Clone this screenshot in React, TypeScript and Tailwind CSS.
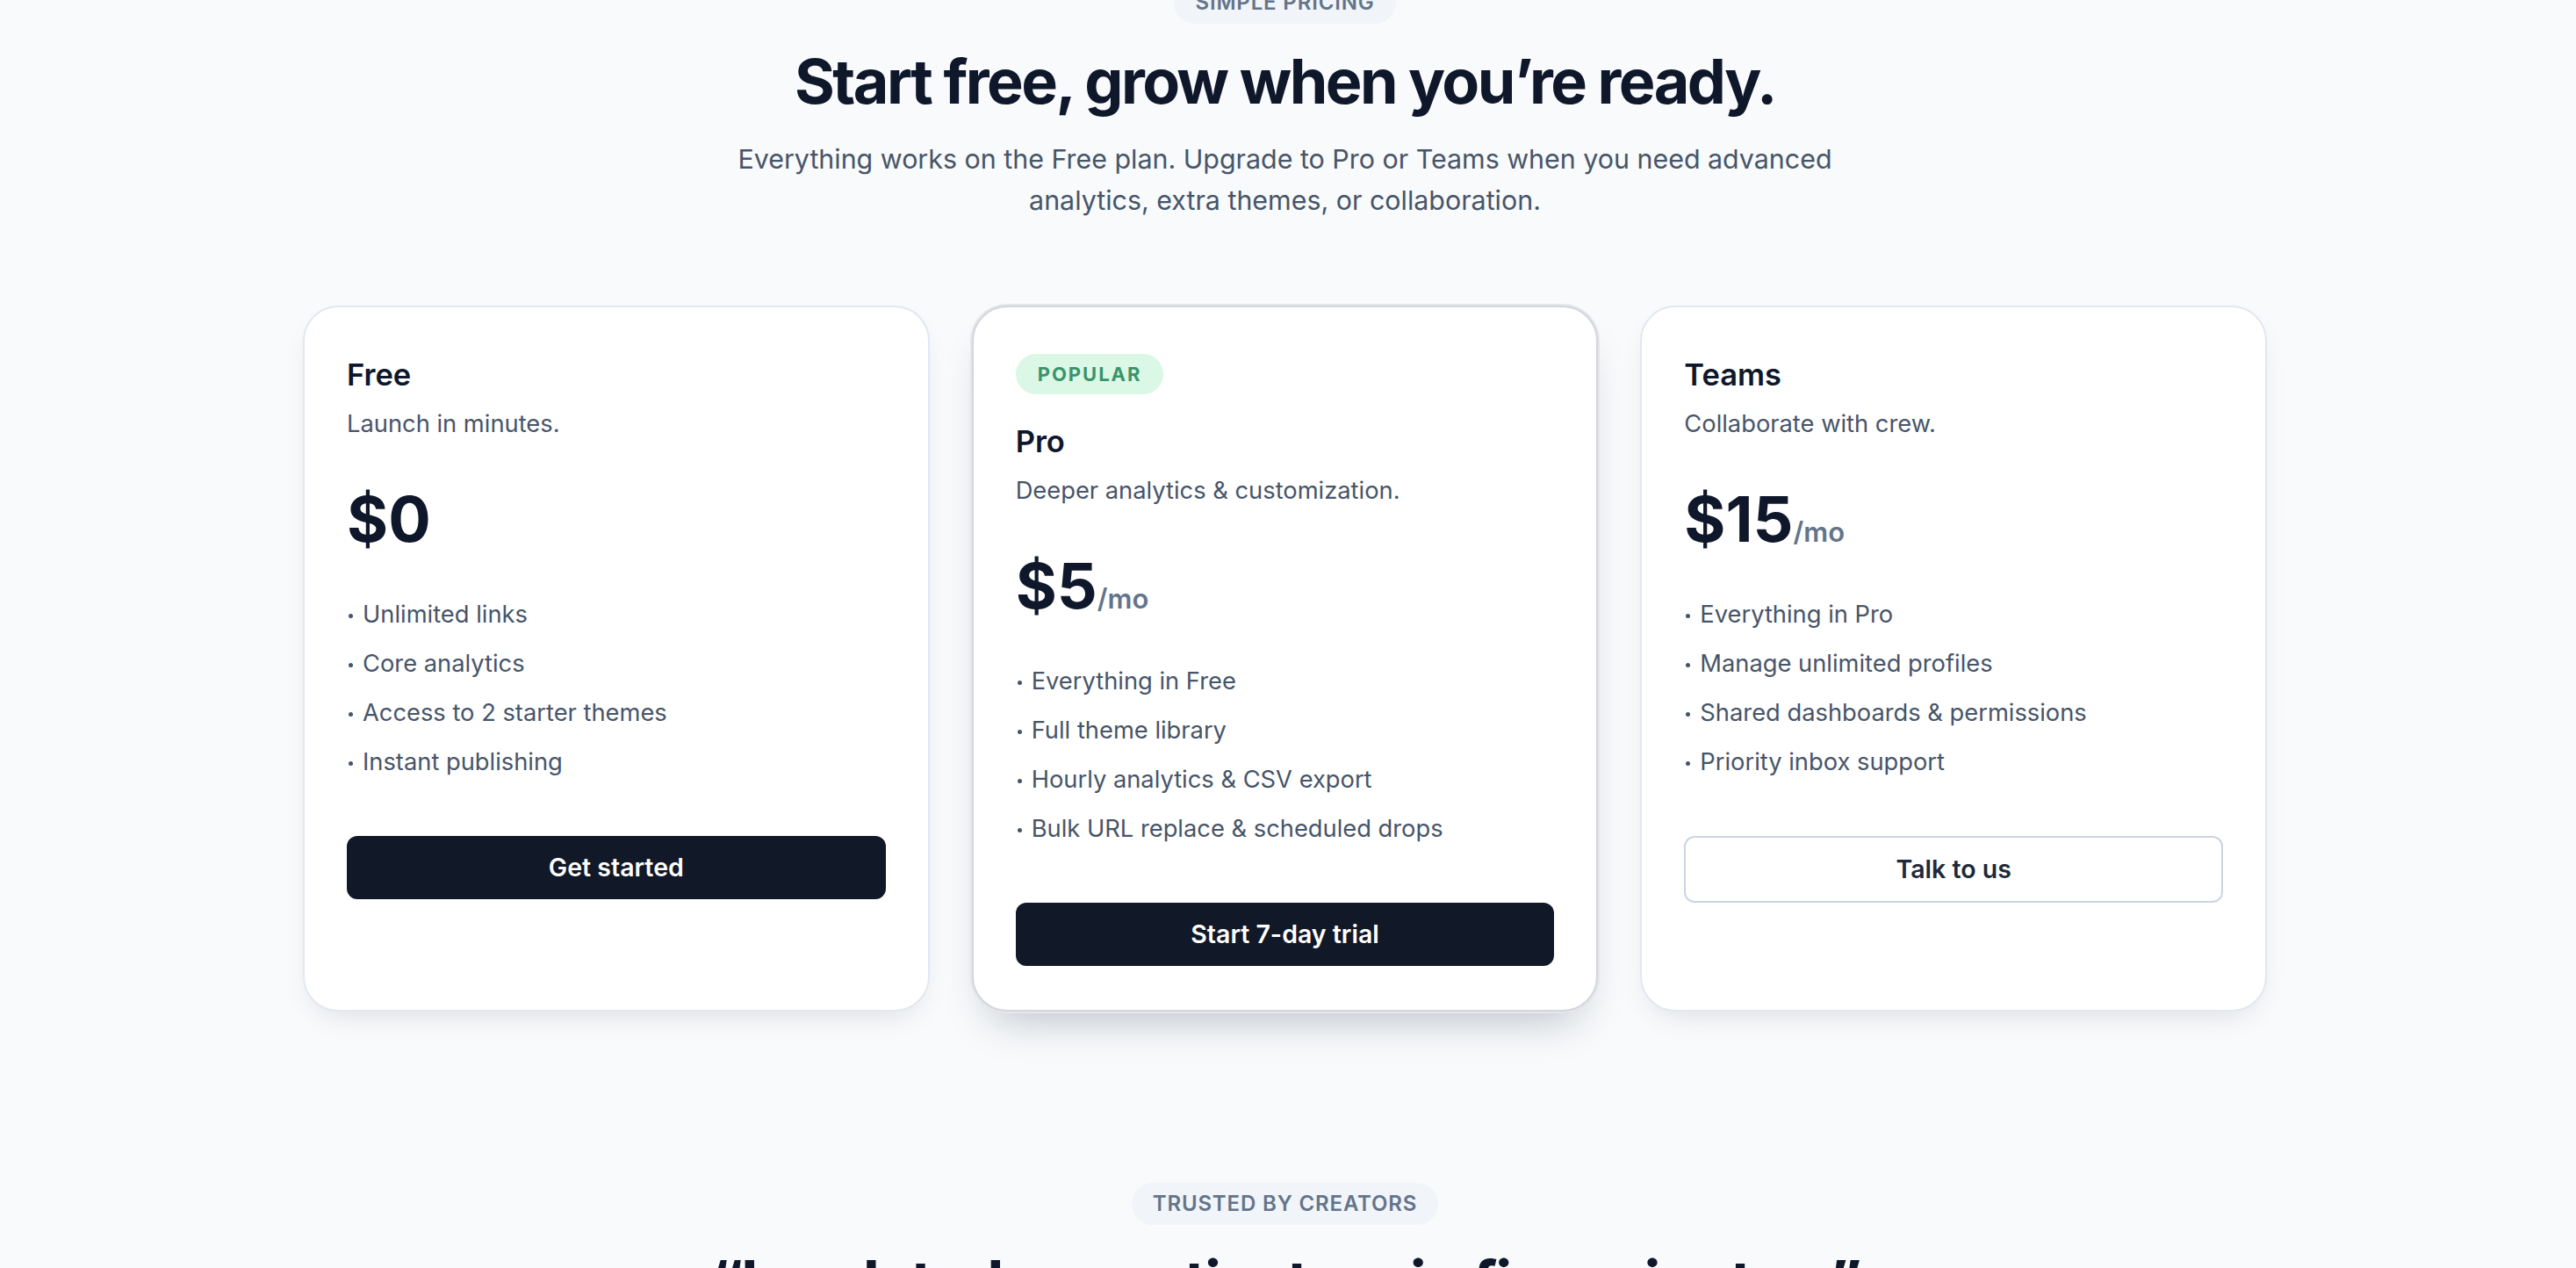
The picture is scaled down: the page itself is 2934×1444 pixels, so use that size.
import React from "react";

type Plan = {
  name: string;
  desc: string;
  price: string;
  per?: string;
  features: string[];
  cta: string;
  popular?: boolean;
  outline?: boolean;
};

const plans: Plan[] = [
  {
    name: "Free",
    desc: "Launch in minutes.",
    price: "$0",
    features: ["Unlimited links", "Core analytics", "Access to 2 starter themes", "Instant publishing"],
    cta: "Get started",
  },
  {
    name: "Pro",
    desc: "Deeper analytics & customization.",
    price: "$5",
    per: "/mo",
    features: [
      "Everything in Free",
      "Full theme library",
      "Hourly analytics & CSV export",
      "Bulk URL replace & scheduled drops",
    ],
    cta: "Start 7-day trial",
    popular: true,
  },
  {
    name: "Teams",
    desc: "Collaborate with crew.",
    price: "$15",
    per: "/mo",
    features: [
      "Everything in Pro",
      "Manage unlimited profiles",
      "Shared dashboards & permissions",
      "Priority inbox support",
    ],
    cta: "Talk to us",
    outline: true,
  },
];

function Badge({ children }: { children: React.ReactNode }) {
  return (
    <span className="inline-flex h-[48px] items-center rounded-full bg-[#f1f5f9] px-[24px] text-[24px] font-semibold uppercase tracking-[0.035em] text-[#64748b]">
      {children}
    </span>
  );
}

function PlanCard({ plan }: { plan: Plan }) {
  const cardClass = plan.popular
    ? "flex flex-col rounded-[40px] border-2 border-[#d3d6dc] bg-white px-[48px] pt-[53px] pb-[50px] shadow-[0_0_0_2px_#e4e6ea,0_28px_50px_-22px_rgba(15,23,42,0.28)]"
    : "flex flex-col rounded-[40px] border-2 border-[#e2e8f0] bg-white px-[48px] pt-[53px] pb-[50px] shadow-[0_14px_34px_-14px_rgba(15,23,42,0.14)]";
  return (
    <div className={cardClass}>
      {plan.popular && (
        <span className="mb-[30px] inline-flex h-[46px] items-center self-start rounded-full bg-[#dbf7e6] px-[25px] text-[22px] font-bold uppercase tracking-[0.09em] text-[#3a946a]">
          Popular
        </span>
      )}
      <h3 className="text-[34.5px] leading-[47px] font-semibold text-[#0f172a]">{plan.name}</h3>
      <p className="mt-[13px] text-[27.3px] leading-[40px] text-[#475569]">{plan.desc}</p>
      <div className="mt-[52px] flex items-baseline">
        <span className="text-[72px] leading-[72px] font-bold text-[#0f172a]">{plan.price}</span>
        {plan.per && (
          <span className="text-[31px] leading-none font-semibold text-[#64748b]">{plan.per}</span>
        )}
      </div>
      <ul className="mt-[53px] flex flex-col gap-[16px]">
        {plan.features.map((f) => (
          <li key={f} className="text-[27.3px] leading-[40px] text-[#475569]">
            <span className="mr-[11px] ml-[2px] inline-block h-[5px] w-[5px] rounded-full bg-[#475569] align-middle" />
            {f}
          </li>
        ))}
      </ul>
      {plan.outline ? (
        <button className="mt-[64px] flex h-[76px] w-full items-center justify-center rounded-[12px] border-2 border-[#cbd5e1] bg-white text-[28.5px] font-semibold text-[#1e293b]">
          {plan.cta}
        </button>
      ) : (
        <button className="mt-[64px] flex h-[72px] w-full items-center justify-center rounded-[12px] bg-[#111827] text-[28.5px] font-semibold text-white">
          {plan.cta}
        </button>
      )}
    </div>
  );
}

export default function App() {
  return (
    <div className="min-h-screen overflow-hidden bg-[#f8fafc] [font-family:Inter,'Noto_Sans',sans-serif]">
      <div className="pr-[7px] pb-[120px]">
        <section className="-mt-[21px] flex flex-col items-center">
          <Badge>Simple pricing</Badge>
          <h2 className="mt-[27px] text-center text-[70px] leading-[77px] font-bold tracking-[-0.036em] text-[#0f172a]">
            Start free, grow when you’re ready.
          </h2>
          <p className="mt-[27px] max-w-[1300px] text-center text-[30.4px] leading-[47px] text-[#475569]">
            Everything works on the Free plan. Upgrade to Pro or Teams when you need advanced analytics, extra
            themes, or collaboration.
          </p>
          <div className="mt-[96px] grid w-[2237px] grid-cols-3 gap-[48px]">
            {plans.map((p) => (
              <PlanCard key={p.name} plan={p} />
            ))}
          </div>
        </section>
        <section className="mt-[195px] flex flex-col items-center">
          <Badge>Trusted by creators</Badge>
          <h2 className="mt-[27px] text-center text-[70px] leading-[77px] font-bold tracking-[-0.036em] text-[#0f172a]">
            “I updated my entire tree in five minutes.”
          </h2>
        </section>
      </div>
    </div>
  );
}
